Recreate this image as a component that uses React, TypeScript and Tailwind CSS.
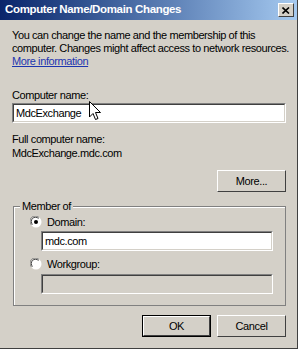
import React from "react";

const font = { fontFamily: '"Liberation Sans", Arial, sans-serif' };

function Btn({ children, def }: { children: React.ReactNode; def?: boolean }) {
  return (
    <div className={`w-[69px] h-[22px] ${def ? "border border-black" : ""} bg-[#d4d0c8]`}>
      <div className="w-full h-full border-t border-l border-t-white border-l-white border-r border-b border-r-[#404040] border-b-[#404040] flex items-center justify-center text-[11px] text-black">
        {children}
      </div>
    </div>
  );
}

function Input({ value, disabled }: { value?: string; disabled?: boolean }) {
  return (
    <div className="h-[20px] border-t border-l border-t-[#808080] border-l-[#808080] border-b border-r border-b-white border-r-white">
      <div className={`w-full h-full border-t border-l border-t-[#404040] border-l-[#404040] border-b border-r border-b-[#d4d0c8] border-r-[#d4d0c8] ${disabled ? "bg-[#d4d0c8]" : "bg-white"} flex items-center px-[2px] text-[11px] text-black`}>
        {value}
      </div>
    </div>
  );
}

function Radio({ checked }: { checked?: boolean }) {
  return (
    <svg width="12" height="12" viewBox="0 0 12 12">
      <circle cx="6" cy="6" r="5.5" fill="#ffffff" />
      <path d="M1.5 9 A5 5 0 0 1 9 1.5" stroke="#808080" strokeWidth="1" fill="none" />
      <path d="M2.5 8.5 A4 4 0 0 1 8.5 2.5" stroke="#404040" strokeWidth="1" fill="none" />
      {checked && <circle cx="6" cy="6" r="2" fill="#000" />}
    </svg>
  );
}

export default function App() {
  return (
    <div className="w-[300px] h-[350px] bg-white relative overflow-hidden tracking-[-0.4px]" style={font}>
      <div className="w-[298px] h-[349px] bg-[#d4d0c8] border-r border-b border-r-[#404040] border-b-[#404040] flex flex-col">
        <div className="h-[20px] flex items-center justify-between pl-[5px] pr-[3px] bg-gradient-to-r from-[#0a246a] to-[#a6caf0]">
          <span className="text-white font-bold text-[11.5px] tracking-[-0.35px]">Computer Name/Domain Changes</span>
          <div className="w-[16px] h-[14px] bg-[#d4d0c8] border-t border-l border-t-white border-l-white border-r border-b border-r-[#404040] border-b-[#404040] flex items-center justify-center">
            <svg width="8" height="7" viewBox="0 0 8 7">
              <path d="M0.5 0.5 L7 6.5 M7 0.5 L0.5 6.5" stroke="#000" strokeWidth="1.6" />
            </svg>
          </div>
        </div>
        <div className="pl-[12px] pr-[11px] flex flex-col text-[11px] text-black whitespace-nowrap">
          <div className="mt-[9px] leading-[13px]">
            <div>You can change the name and the membership of this</div>
            <div>computer. Changes might affect access to network resources.</div>
            <div className="text-[#1c35b0] underline">More information</div>
          </div>
          <div className="mt-[21px] leading-[13px]">Computer name:</div>
          <div className="mt-[1px]">
            <Input value="MdcExchange" />
          </div>
          <div className="mt-[10px] leading-[13px]">Full computer name:</div>
          <div className="leading-[13px] mt-[1px]">MdcExchange.mdc.com</div>
          <div className="mt-[10px] flex justify-end">
            <Btn>More...</Btn>
          </div>
          <div className="mt-[14px] ml-[1px] relative border border-[#808080] h-[100px]">
            <div className="absolute inset-0 border-t border-l border-white pointer-events-none" />
            <div className="absolute -top-[8px] left-[6px] bg-[#d4d0c8] px-[2px] leading-[14px]">Member of</div>
            <div className="pl-[16px] pr-[12px] pt-[8px] flex flex-col">
              <div className="flex items-center gap-[5px] h-[14px]">
                <Radio checked />
                <span>Domain:</span>
              </div>
              <div className="ml-[11px] mt-[2px]">
                <Input value="mdc.com" />
              </div>
              <div className="flex items-center gap-[5px] h-[14px] mt-[6px]">
                <Radio />
                <span>Workgroup:</span>
              </div>
              <div className="ml-[11px] mt-[3px]">
                <Input disabled />
              </div>
            </div>
          </div>
          <div className="mt-[9px] flex justify-end gap-[6px]">
            <Btn def>OK</Btn>
            <Btn>Cancel</Btn>
          </div>
        </div>
      </div>
      <svg className="absolute left-[89px] top-[101px]" width="13" height="21" viewBox="0 0 13 21">
        <path d="M0.5 0.5 L0.5 16 L4 12.5 L6.5 18.5 L9 17.5 L6.5 11.5 L11.5 11.5 Z" fill="#fff" stroke="#000" strokeWidth="1" />
      </svg>
    </div>
  );
}
